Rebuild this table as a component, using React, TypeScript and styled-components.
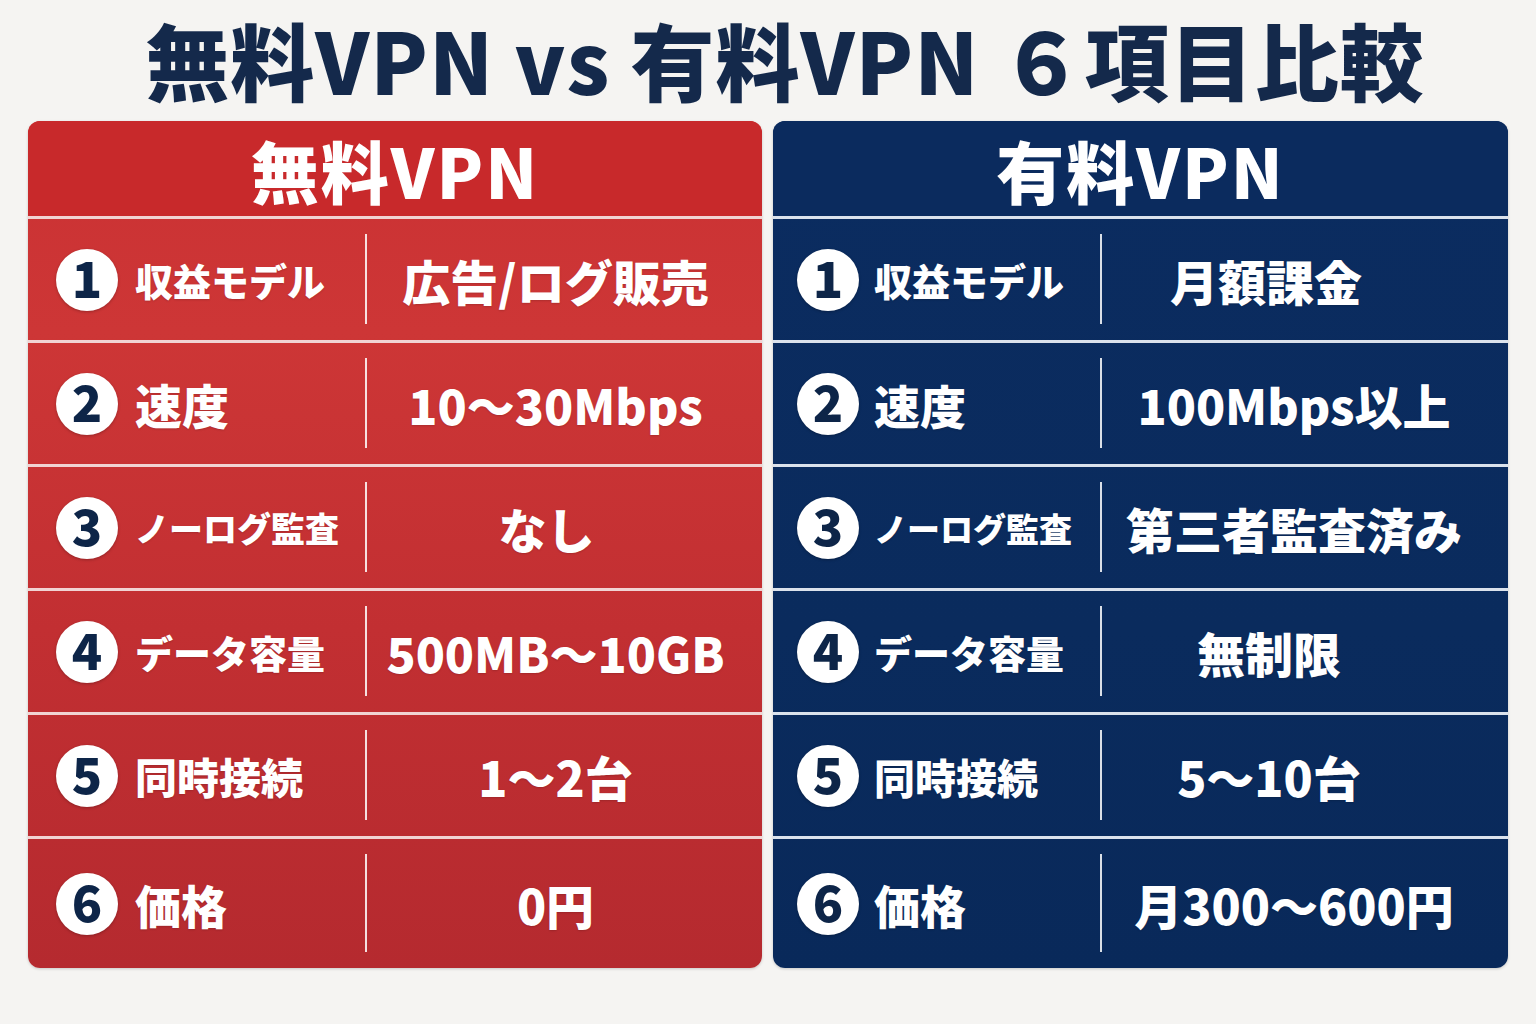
import * as React from "react"
import styled, { createGlobalStyle } from "styled-components"

type Tone = "red" | "blue"

type Item = {
  label: string
  labelSize: number
  value: string
  nudge?: number
}

const tones = {
  red: {
    head: "#c8292b",
    body: "linear-gradient(180deg, #cb3133 0%, #cd3636 25%, #c22f32 60%, #b52a2f 100%)",
    line: "#f1d3d3",
    split: 337,
    pad: 28,
    gap: 17,
    valuePad: 18,
  },
  blue: {
    head: "#0b2b5e",
    body: "linear-gradient(180deg, #0b2c60 0%, #0a2b5d 60%, #09295a 100%)",
    line: "#dbe2ec",
    split: 327,
    pad: 24,
    gap: 15,
    valuePad: 22,
  },
}

const freeItems: Item[] = [
  { label: "収益モデル", labelSize: 38, value: "広告/ログ販売" },
  { label: "速度", labelSize: 47, value: "10～30Mbps" },
  { label: "ノーログ監査", labelSize: 34, value: "なし", nudge: 18 },
  { label: "データ容量", labelSize: 38, value: "500MB～10GB" },
  { label: "同時接続", labelSize: 42, value: "1～2台" },
  { label: "価格", labelSize: 46, value: "0円" },
]

const paidItems: Item[] = [
  { label: "収益モデル", labelSize: 38, value: "月額課金", nudge: 56 },
  { label: "速度", labelSize: 46, value: "100Mbps以上" },
  { label: "ノーログ監査", labelSize: 33, value: "第三者監査済み" },
  { label: "データ容量", labelSize: 38, value: "無制限", nudge: 50 },
  { label: "同時接続", labelSize: 41, value: "5～10台", nudge: 50 },
  { label: "価格", labelSize: 46, value: "月300～600円" },
]

const GlobalStyle = createGlobalStyle`
  html, body {
    margin: 0;
    padding: 0;
    background: #f5f4f2;
  }
  body {
    font-family: "Noto Sans CJK JP", "Noto Sans", sans-serif;
  }
`

const Page = styled.div`
  width: 1536px;
  height: 1024px;
  box-sizing: border-box;
  background: #f5f4f2;
  display: flex;
  flex-direction: column;
`

const Title = styled.h1`
  margin: 0;
  height: 121px;
  display: flex;
  align-items: center;
  justify-content: center;
  padding: 0 0 4px 34px;
  box-sizing: border-box;
  color: #14294b;
  font-size: 84px;
  line-height: 1;
  font-weight: 900;
  letter-spacing: 1px;
  white-space: pre;
`

const Columns = styled.div`
  display: grid;
  grid-template-columns: 734px 735px;
  column-gap: 11px;
  padding: 0 28px;
  height: 847px;
`

const Panel = styled.section<{ $tone: Tone }>`
  border-radius: 12px;
  overflow: hidden;
  display: flex;
  flex-direction: column;
  background: ${(p) => tones[p.$tone].body};
  box-shadow: 0 1px 3px rgba(0, 0, 0, 0.18);
`

const PanelHead = styled.div<{ $tone: Tone }>`
  height: 95px;
  flex: none;
  display: flex;
  align-items: center;
  justify-content: center;
  padding-top: 2px;
  background: ${(p) => tones[p.$tone].head};
  color: #ffffff;
  font-size: 68px;
  line-height: 1;
  font-weight: 900;
  letter-spacing: 2px;
  box-sizing: border-box;
`

const Row = styled.div<{ $tone: Tone }>`
  height: 124px;
  flex: none;
  box-sizing: border-box;
  display: grid;
  grid-template-columns: ${(p) => tones[p.$tone].split}px 2px 1fr;
  border-top: 3px solid ${(p) => tones[p.$tone].line};

  &:last-child {
    flex: 1;
  }
`

const LabelCell = styled.div<{ $tone: Tone }>`
  display: flex;
  align-items: center;
  gap: ${(p) => tones[p.$tone].gap}px;
  padding-left: ${(p) => tones[p.$tone].pad}px;
`

const Badge = styled.span`
  width: 62px;
  height: 62px;
  flex: none;
  box-sizing: border-box;
  padding-bottom: 7px;
  border-radius: 50%;
  background: #ffffff;
  color: #0d2548;
  display: flex;
  align-items: center;
  justify-content: center;
  font-size: 50px;
  font-weight: 900;
  line-height: 1;
  box-shadow: 0 1px 3px rgba(0, 0, 0, 0.25);
`

const Label = styled.span<{ $size: number }>`
  color: #ffffff;
  font-size: ${(p) => p.$size}px;
  font-weight: 900;
  white-space: nowrap;
  text-shadow: 0 1px 2px rgba(0, 0, 0, 0.15);
`

const Divider = styled.span`
  margin: 15px 0 16px;
  background: rgba(255, 255, 255, 0.85);
`

const ValueCell = styled.div<{ $pad: number }>`
  display: flex;
  align-items: center;
  justify-content: center;
  padding-right: ${(p) => p.$pad}px;
  color: #ffffff;
  font-size: 48px;
  font-weight: 900;
  white-space: nowrap;
  text-shadow: 0 1px 2px rgba(0, 0, 0, 0.15);
`

const Compare = ({ tone, title, items }: { tone: Tone; title: string; items: Item[] }) => (
  <Panel $tone={tone}>
    <PanelHead $tone={tone}>{title}</PanelHead>
    {items.map((item, i) => (
      <Row key={item.label} $tone={tone}>
        <LabelCell $tone={tone}>
          <Badge>{i + 1}</Badge>
          <Label $size={item.labelSize}>{item.label}</Label>
        </LabelCell>
        <Divider />
        <ValueCell $pad={tones[tone].valuePad + (item.nudge ?? 0)}>{item.value}</ValueCell>
      </Row>
    ))}
  </Panel>
)

export default function App() {
  return (
    <Page>
      <GlobalStyle />
      <Title>無料VPN vs 有料VPN ６項目比較</Title>
      <Columns>
        <Compare tone="red" title="無料VPN" items={freeItems} />
        <Compare tone="blue" title="有料VPN" items={paidItems} />
      </Columns>
    </Page>
  )
}
